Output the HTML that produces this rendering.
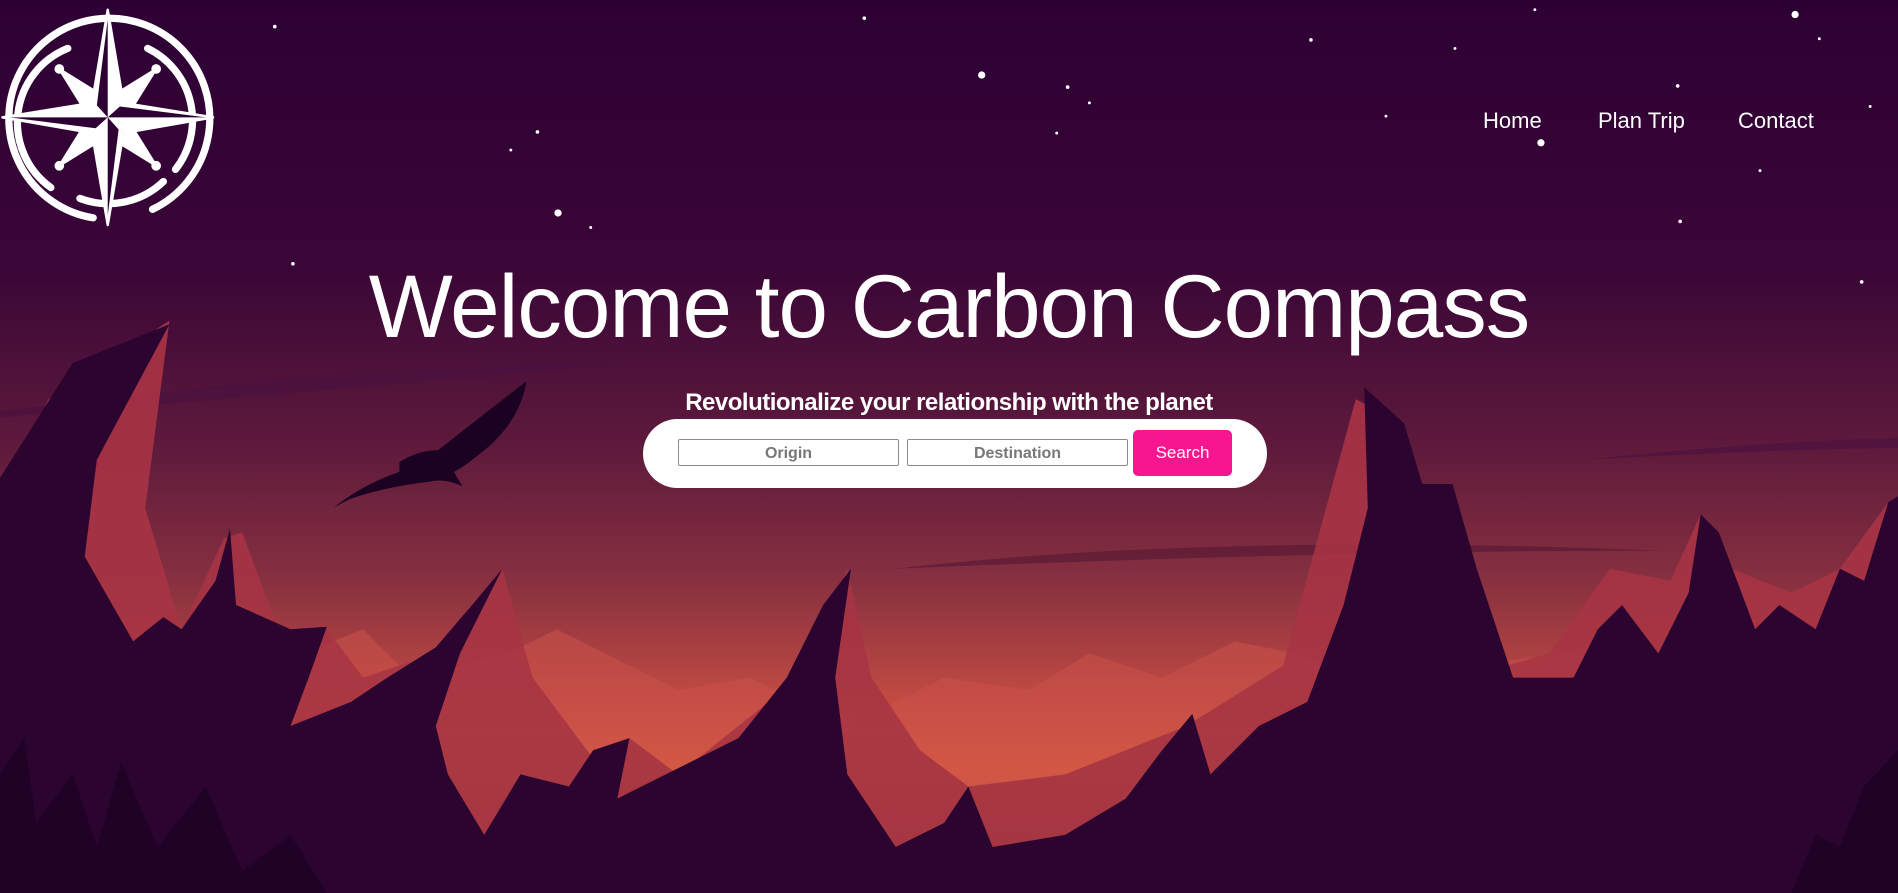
<!DOCTYPE html>
<html><head><meta charset="utf-8"><style>
html,body{margin:0;padding:0;width:1898px;height:893px;overflow:hidden;background:#2e0033;font-family:"Liberation Sans",sans-serif}
svg.bg{position:absolute;left:0;top:0;width:1898px;height:893px}
.nav{position:absolute;top:108px;color:#fff;font-size:22px}
h1{position:absolute;left:0;width:1898px;top:262px;margin:0;text-align:center;color:#fff;font-weight:normal;font-size:89px;letter-spacing:-1px;line-height:1}
.sub{position:absolute;left:0;width:1898px;top:389px;text-align:center;color:#fff;font-weight:bold;font-size:24px;letter-spacing:-0.5px}
.pill{position:absolute;left:643px;top:419px;width:624px;height:69px;background:#fff;border-radius:35px}
.in{position:absolute;top:439px;height:25px;border:1px solid #8a8a8a;border-radius:2px;background:#fff;color:#777;font-weight:bold;font-size:16px;text-align:center;line-height:27px}
.btn{position:absolute;left:1133px;top:430px;width:99px;height:46px;background:#f7168f;border-radius:5px;color:#fff;font-size:17px;text-align:center;line-height:46px}
</style></head><body>
<svg class="bg" viewBox="0 0 1568 738" preserveAspectRatio="none">
<defs>
<linearGradient id="sky" x1="0" y1="0" x2="0" y2="1">
<stop offset="0" stop-color="#2d0034"/>
<stop offset="0.3" stop-color="#3a0637"/>
<stop offset="0.5" stop-color="#5e1a3c"/>
<stop offset="0.65" stop-color="#873040"/>
<stop offset="0.78" stop-color="#c04a42"/>
<stop offset="0.86" stop-color="#e2623e"/>
<stop offset="1" stop-color="#b8404a"/>
</linearGradient>
<linearGradient id="mid" x1="0" y1="0" x2="0" y2="1">
<stop offset="0" stop-color="#b83848"/>
<stop offset="1" stop-color="#9a2e40"/>
</linearGradient>
</defs>
<rect width="1568" height="738" fill="url(#sky)"/>
<path d="M0 340 Q300 300 520 300 Q300 320 0 345Z" fill="#4a1040" opacity=".6"/>
<path d="M740 470 Q1000 440 1370 455 Q1100 455 740 470Z" fill="#5a1a35" opacity=".7"/>
<path d="M1310 380 Q1450 365 1568 362 L1568 370 Q1450 372 1310 380Z" fill="#4a1040" opacity=".6"/>
<path d="M200 560 L300 520 L340 560 L420 540 L460 520 L510 545 L560 570 L620 560 L700 600 L780 560 L850 570 L900 540 L960 560 L1020 530 L1070 540 L1120 560 L1300 540 L1350 560 L1568 540 L1568 738 L0 738Z" fill="#c8504a" opacity=".6"/>
<path d="M0 420 L40 330 L140 265 L120 420 L150 520 L185 445 L200 440 L230 520 L270 520 L300 560 L360 540 L415 470 L440 560 L500 640 L520 610 L560 640 L610 600 L660 560 L700 470 L720 560 L760 620 L800 650 L880 640 L930 620 L980 600 L1060 550 L1120 330 L1140 340 L1170 410 L1210 560 L1280 540 L1330 470 L1380 480 L1405 425 L1430 470 L1480 490 L1520 470 L1560 415 L1568 410 L1568 738 L0 738Z" fill="url(#mid)" opacity=".8"/>
<path d="M0 395 L60 300 L140 268 L80 380 L70 460 L110 530 L135 510 L150 520 L178 480 L190 437 L195 500 L240 520 L270 518 L255 560 L240 600 L290 580 L320 560 L360 535 L390 500 L415 470 L380 540 L360 600 L370 640 L400 690 L430 640 L470 650 L490 620 L520 610 L510 660 L550 640 L610 610 L650 560 L680 500 L703 470 L690 560 L700 640 L740 700 L780 680 L800 650 L820 700 L880 690 L930 660 L960 620 L985 590 L1000 640 L1040 600 L1080 580 L1110 500 L1130 420 L1127 320 L1160 350 L1175 400 L1200 400 L1220 470 L1250 560 L1300 560 L1320 520 L1340 500 L1370 540 L1380 520 L1395 490 L1405 425 L1420 440 L1450 520 L1470 500 L1500 520 L1520 470 L1540 480 L1560 415 L1568 410 L1568 738 L0 738Z" fill="#2b0430"/>
<path d="M0 640 L20 610 L30 680 L60 640 L80 700 L100 630 L130 700 L170 650 L200 720 L240 690 L270 738 L0 738Z" fill="#1f0226"/>
<path d="M1480 738 L1500 690 L1520 700 L1540 650 L1568 620 L1568 738Z" fill="#1f0226"/>
<path d="M435 315 Q430 345 405 368 Q385 385 375 390 L382 402 Q368 395 355 398 Q320 402 290 412 Q278 418 275 420 Q300 400 330 390 L330 382 Q345 372 362 372 Q390 350 435 315Z" fill="#1b0222"/>
<g fill="#fff">
<circle cx="227" cy="22" r="1.5"/><circle cx="714" cy="15" r="1.5"/><circle cx="811" cy="62" r="3"/><circle cx="882" cy="72" r="1.5"/><circle cx="900" cy="85" r="1.2"/><circle cx="873" cy="110" r="1.2"/><circle cx="1083" cy="33" r="1.5"/><circle cx="1202" cy="40" r="1.2"/><circle cx="1268" cy="8" r="1.2"/><circle cx="1483" cy="12" r="3"/><circle cx="1503" cy="32" r="1.2"/><circle cx="1386" cy="71" r="1.5"/><circle cx="1145" cy="96" r="1.2"/><circle cx="1273" cy="118" r="3"/><circle cx="1454" cy="141" r="1.2"/><circle cx="1545" cy="88" r="1.2"/><circle cx="1388" cy="183" r="1.5"/><circle cx="444" cy="109" r="1.5"/><circle cx="422" cy="124" r="1.2"/><circle cx="461" cy="176" r="3"/><circle cx="488" cy="188" r="1.2"/><circle cx="242" cy="218" r="1.5"/><circle cx="1538" cy="233" r="1.5"/>
</g>
<g fill="none" stroke="#fff" stroke-width="6" stroke-linecap="round">
<path d="M77 180 A83 83 0 1 1 126 173"/>
<path d="M42 155 A66 66 0 0 1 56 40 M122 40 A66 66 0 0 1 145 140 M135 150 A66 66 0 0 1 66 164"/>
</g>
<g fill="#fff" stroke="#fff" stroke-width="2" stroke-linejoin="round">
<path d="M49 57 L86 80 L89 97 L72 94Z"/>
<path d="M129 57 L106 94 L89 97 L92 80Z"/>
<path d="M129 137 L92 114 L89 97 L106 100Z"/>
<path d="M49 137 L72 100 L89 97 L86 114Z"/>
<circle cx="49" cy="57" r="3"/><circle cx="129" cy="57" r="3"/><circle cx="129" cy="137" r="3"/><circle cx="49" cy="137" r="3"/>
<path d="M89 8 L102 85 L176 97 L102 110 L89 186 L76 110 L2 97 L76 85Z"/>
</g>
<g fill="#2e0033">
<path d="M89 16 L89 97 L80 87Z"/><path d="M170 97 L89 97 L99 88Z"/><path d="M89 178 L89 97 L98 107Z"/><path d="M8 97 L89 97 L79 106Z"/>
<path d="M52 60 L89 97 L76 84Z"/><path d="M126 60 L89 97 L102 84Z" transform="rotate(90 89 97)"/><path d="M52 60 L89 97 L76 84Z" transform="rotate(180 89 97)"/><path d="M52 60 L89 97 L76 84Z" transform="rotate(270 89 97)"/>
</g>
</svg>
<div class="nav" style="left:1483px">Home</div>
<div class="nav" style="left:1598px">Plan Trip</div>
<div class="nav" style="left:1738px">Contact</div>
<h1>Welcome to Carbon Compass</h1>
<div class="sub">Revolutionalize your relationship with the planet</div>
<div class="pill"></div>
<div class="in" style="left:678px;width:219px">Origin</div>
<div class="in" style="left:907px;width:219px">Destination</div>
<div class="btn">Search</div>
</body></html>
